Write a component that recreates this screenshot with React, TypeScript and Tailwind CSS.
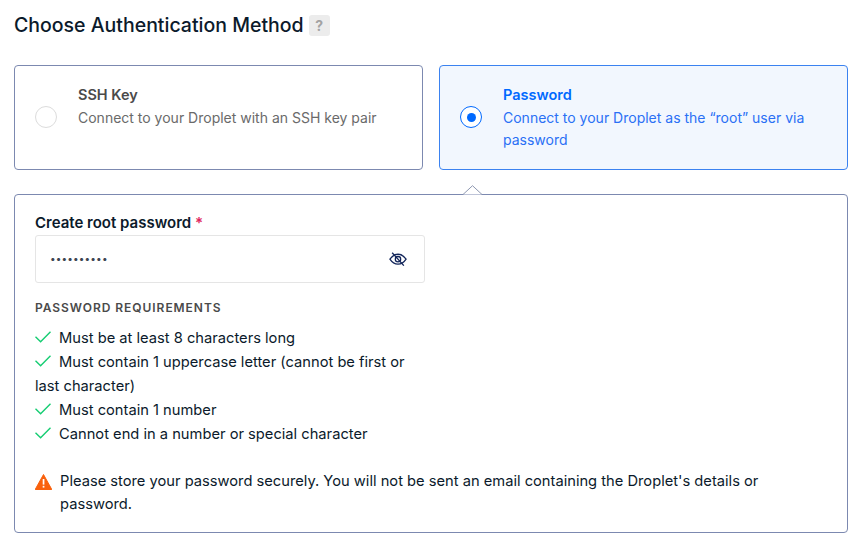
import React from 'react';

const font = "font-['Inter','Liberation_Sans',sans-serif]";

const Requirement = ({ children }: { children: React.ReactNode }) => (
  <li className="text-[14.7px] leading-6 text-[#0b1a2b]">
    <svg className="mr-[8px] inline-block -translate-y-[2px]" width="16" height="12" viewBox="0 0 16 12" fill="none" stroke="#15cd72" strokeWidth="1.4">
      <path d="M0.5 5.8 L5.6 10.8 L15.5 0.7" />
    </svg>
    {children}
  </li>
);

const EyeOff = () => (
  <svg width="18" height="14.4" viewBox="0 0 20 16" fill="none" stroke="#12255a" strokeWidth="1.4">
    <path d="M1 8 C4 3.5 7 2.5 10 2.5 C13 2.5 16 3.5 19 8 C16 12.5 13 13.5 10 13.5 C7 13.5 4 12.5 1 8 Z" />
    <circle cx="10" cy="8" r="3" />
    <path d="M3.5 0.8 L16.5 15.2" />
  </svg>
);

const App = () => {
  return (
    <div className={`${font} h-[556px] w-[868px] overflow-hidden bg-white pl-[14px] pr-[20px] pt-[14px]`}>
      <div className="flex h-[23px] items-center">
        <h2 className="text-[19.5px] font-medium leading-[23px] text-[#0b1a2b]">Choose Authentication Method</h2>
        <span className="ml-[5px] flex h-[21px] w-[21px] items-center justify-center rounded-[3px] bg-[#ececec] text-[14px] font-bold text-[#a3a3a3]">?</span>
      </div>

      <div className="mt-[28px] grid grid-cols-2 gap-[16px]">
        <div className="flex h-[105px] rounded-[4px] border border-[#7c89b0] bg-white pl-[20px] pr-[20px] pt-[17px]">
          <span className="mt-[23px] h-[22px] w-[22px] shrink-0 rounded-full border border-[#dcdcdc]" />
          <div className="ml-[21px]">
            <p className="text-[14.5px] font-semibold leading-[24px] text-[#4a4a4a]">SSH Key</p>
            <p className="text-[14px] leading-[22px] text-[#6a6a6a]">Connect to your Droplet with an SSH key pair</p>
          </div>
        </div>
        <div className="flex h-[105px] rounded-[4px] border border-[#3b82f0] bg-[#f2f7fe] pl-[20px] pr-[20px] pt-[17px]">
          <span className="mt-[23px] flex h-[22px] w-[22px] shrink-0 items-center justify-center rounded-full border border-[#0069ff] bg-white">
            <span className="h-[9px] w-[9px] rounded-full bg-[#0069ff]" />
          </span>
          <div className="ml-[21px]">
            <p className="text-[14.5px] font-semibold leading-[24px] text-[#0069ff]">Password</p>
            <p className="text-[14px] leading-[22px] text-[#2a70f5]">Connect to your Droplet as the “root” user via password</p>
          </div>
        </div>
      </div>

      <div className="relative mt-[24px] h-[339px] rounded-[4px] border border-[#7c89b0] bg-white pl-[20px] pr-[20px] pt-[18px]">
        <svg className="absolute left-[448px] top-[-10px]" width="19" height="10" viewBox="0 0 19 10">
          <path d="M0 9.5 L9.5 0.7 L19 9.5" fill="#fff" stroke="#8d97b0" strokeWidth="1" />
        </svg>
        <p className="text-[15px] font-semibold leading-5 text-[#0b1a2b]">
          Create root password <span className="text-[#e0245e]">*</span>
        </p>
        <div className="mt-[2px] flex h-[48px] w-[390px] items-center justify-between rounded-[3px] border border-[#e5e5e5] pl-[14px] pr-[17px]">
          <span className="-translate-y-[1px] text-[10px] tracking-[0.14px] text-[#3d4451]">••••••••••</span>
          <EyeOff />
        </div>

        <p className="mt-[17px] text-[12px] font-semibold leading-[16px] tracking-[0.95px] text-[#4a4a4a]">PASSWORD REQUIREMENTS</p>
        <ul className="mt-[10px] w-[390px]">
          <Requirement>Must be at least 8 characters long</Requirement>
          <Requirement>Must contain 1 uppercase letter (cannot be first or last character)</Requirement>
          <Requirement>Must contain 1 number</Requirement>
          <Requirement>Cannot end in a number or special character</Requirement>
        </ul>

        <div className="mt-[24px] flex">
          <svg className="mt-[4px] shrink-0" width="17" height="16" viewBox="0 0 17 16">
            <path d="M8.5 0.5 L16.8 15.5 L0.2 15.5 Z" fill="#f9610d" stroke="#f9610d" strokeLinejoin="round" />
            <rect x="7.7" y="5" width="1.7" height="5.6" fill="#fff" />
            <rect x="7.7" y="11.8" width="1.7" height="1.8" fill="#fff" />
          </svg>
          <p className="ml-[8px] text-[14.7px] leading-[23px] text-[#0b1a2b]">
            Please store your password securely. You will not be sent an email containing the Droplet's details or password.
          </p>
        </div>
      </div>
    </div>
  );
};

export default App;
